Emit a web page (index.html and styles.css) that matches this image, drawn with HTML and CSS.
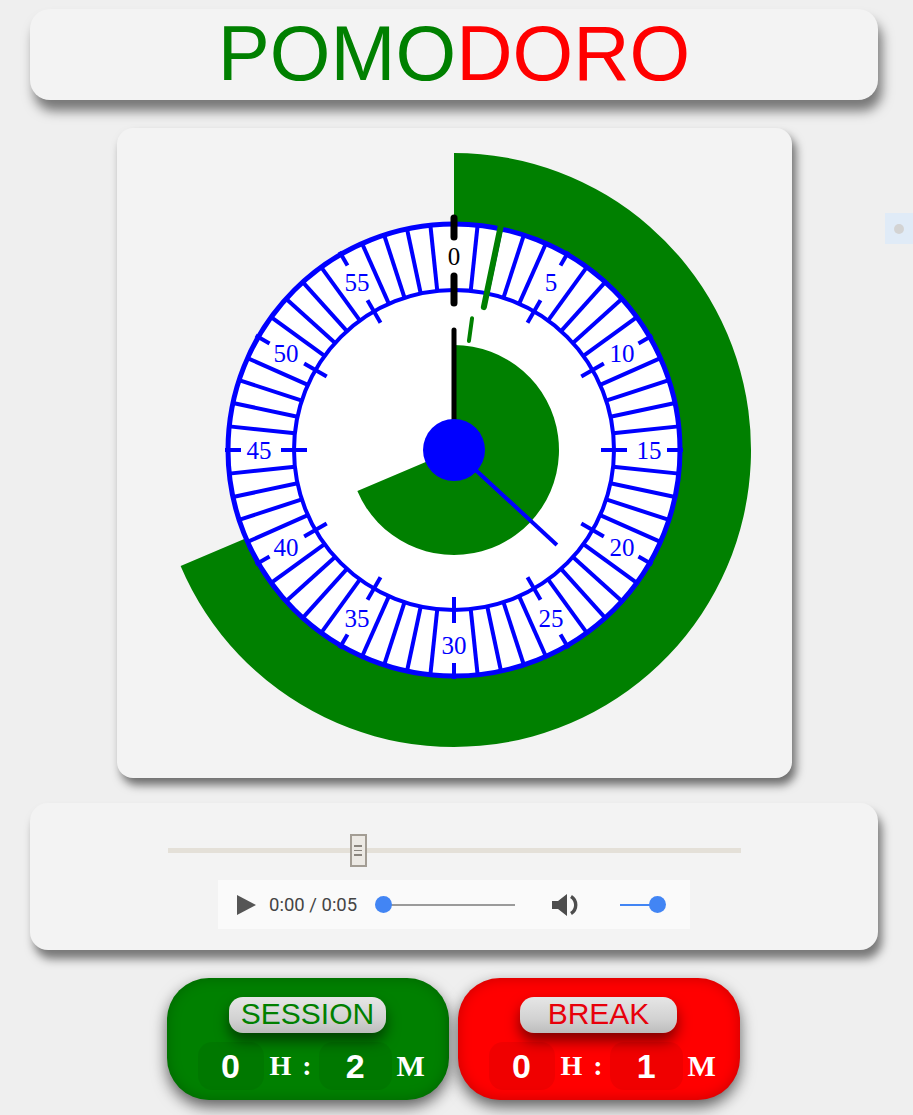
FILE: index.html
```html
<!DOCTYPE html>
<html lang="en">
<head>
<meta charset="utf-8">
<title>Pomodoro</title>
<link rel="stylesheet" href="styles.css">
</head>
<body>
<div class="app">
  <header class="title-card">
    <h1 class="title"><span class="green">POMO</span><span class="red">DORO</span></h1>
  </header>

  <section class="clock-card">
    <svg class="clock" width="600" height="600" viewBox="-300 -300 600 600">
      <defs>
        <line id="m" x1="0" y1="-160" x2="0" y2="-226" stroke="#0000ff" stroke-width="4"/>
        <g id="t">
          <line x1="0" y1="-147" x2="0" y2="-173" stroke="#0000ff" stroke-width="4"/>
          <line x1="0" y1="-213" x2="0" y2="-229" stroke="#0000ff" stroke-width="4"/>
        </g>
      </defs>
      <path d="M0,0 L0,-297 A297,297 0 1 1 -273.4,116.0 Z" fill="#008000"/>
      <circle r="226" fill="#ffffff" stroke="#0000ff" stroke-width="5"/>
      <circle r="160" fill="none" stroke="#0000ff" stroke-width="4"/>
      <g>
        <use href="#m" transform="rotate(6)"/><use href="#m" transform="rotate(12)"/><use href="#m" transform="rotate(18)"/><use href="#m" transform="rotate(24)"/>
        <use href="#m" transform="rotate(36)"/><use href="#m" transform="rotate(42)"/><use href="#m" transform="rotate(48)"/><use href="#m" transform="rotate(54)"/>
        <use href="#m" transform="rotate(66)"/><use href="#m" transform="rotate(72)"/><use href="#m" transform="rotate(78)"/><use href="#m" transform="rotate(84)"/>
        <use href="#m" transform="rotate(96)"/><use href="#m" transform="rotate(102)"/><use href="#m" transform="rotate(108)"/><use href="#m" transform="rotate(114)"/>
        <use href="#m" transform="rotate(126)"/><use href="#m" transform="rotate(132)"/><use href="#m" transform="rotate(138)"/><use href="#m" transform="rotate(144)"/>
        <use href="#m" transform="rotate(156)"/><use href="#m" transform="rotate(162)"/><use href="#m" transform="rotate(168)"/><use href="#m" transform="rotate(174)"/>
        <use href="#m" transform="rotate(186)"/><use href="#m" transform="rotate(192)"/><use href="#m" transform="rotate(198)"/><use href="#m" transform="rotate(204)"/>
        <use href="#m" transform="rotate(216)"/><use href="#m" transform="rotate(222)"/><use href="#m" transform="rotate(228)"/><use href="#m" transform="rotate(234)"/>
        <use href="#m" transform="rotate(246)"/><use href="#m" transform="rotate(252)"/><use href="#m" transform="rotate(258)"/><use href="#m" transform="rotate(264)"/>
        <use href="#m" transform="rotate(276)"/><use href="#m" transform="rotate(282)"/><use href="#m" transform="rotate(288)"/><use href="#m" transform="rotate(294)"/>
        <use href="#m" transform="rotate(306)"/><use href="#m" transform="rotate(312)"/><use href="#m" transform="rotate(318)"/><use href="#m" transform="rotate(324)"/>
        <use href="#m" transform="rotate(336)"/><use href="#m" transform="rotate(342)"/><use href="#m" transform="rotate(348)"/><use href="#m" transform="rotate(354)"/>
      </g>
      <g>
        <use href="#t" transform="rotate(30)"/><use href="#t" transform="rotate(60)"/><use href="#t" transform="rotate(90)"/>
        <use href="#t" transform="rotate(120)"/><use href="#t" transform="rotate(150)"/><use href="#t" transform="rotate(180)"/>
        <use href="#t" transform="rotate(210)"/><use href="#t" transform="rotate(240)"/><use href="#t" transform="rotate(270)"/>
        <use href="#t" transform="rotate(300)"/><use href="#t" transform="rotate(330)"/>
      </g>
      <g class="labels">
        <text x="0" y="-194" class="zero">0</text>
        <text x="97" y="-168">5</text>
        <text x="168" y="-97">10</text>
        <text x="195" y="0">15</text>
        <text x="168" y="97">20</text>
        <text x="97" y="168">25</text>
        <text x="0" y="195">30</text>
        <text x="-97" y="168">35</text>
        <text x="-168" y="97">40</text>
        <text x="-195" y="0">45</text>
        <text x="-168" y="-97">50</text>
        <text x="-97" y="-168">55</text>
      </g>
      <path d="M0,0 L0,-105 A105,105 0 1 1 -96.65,41.03 Z" fill="#008000"/>
      <g stroke-linecap="round">
        <line x1="0" y1="-213" x2="0" y2="-232" stroke="#000" stroke-width="7"/>
        <line x1="0" y1="-147" x2="0" y2="-174" stroke="#000" stroke-width="7"/>
        <line x1="0" y1="-146" x2="0" y2="-230" stroke="#008000" stroke-width="6" transform="rotate(11.8)"/>
        <line x1="0" y1="-110" x2="0" y2="-133" stroke="#008000" stroke-width="4" transform="rotate(7.8)"/>
        <line x1="0" y1="0" x2="0" y2="-120" stroke="#000" stroke-width="5"/>
      </g>
      <line x1="0" y1="0" x2="0" y2="-140" stroke="#0000ff" stroke-width="4" transform="rotate(132.7)"/>
      <circle r="31" fill="#0000ff"/>
    </svg>
  </section>

  <section class="controls-card">
    <div class="range">
      <div class="range-thumb"><i></i><i></i><i></i></div>
    </div>
    <div class="player">
      <svg class="play" width="19" height="20" viewBox="0 0 19 20"><polygon points="0,0 19,10 0,20" fill="#555"/></svg>
      <span class="time">0:00 / 0:05</span>
      <div class="progress"><span class="dot"></span></div>
      <svg class="vol" width="30" height="22" viewBox="0 0 30 22"><path d="M0,7 h6 l9,-7 v22 l-9,-7 h-6 z" fill="#4d4d4d"/><path d="M19,2.5 A10,10 0 0 1 19,19.5" fill="none" stroke="#4d4d4d" stroke-width="3.4"/></svg>
      <div class="volume"><span class="dot"></span></div>
    </div>
  </section>

  <section class="buttons">
    <div class="btn btn-session">
      <div class="pill pill-green">SESSION</div>
      <div class="readout">
        <span class="val">0</span><span class="unit">H</span><span class="colon">:</span><span class="val val2">2</span><span class="unit unit-m">M</span>
      </div>
    </div>
    <div class="btn btn-break">
      <div class="pill pill-red">BREAK</div>
      <div class="readout">
        <span class="val">0</span><span class="unit">H</span><span class="colon">:</span><span class="val val2">1</span><span class="unit unit-m">M</span>
      </div>
    </div>
  </section>
</div>
<div class="side-widget"><span></span></div>
</body>
</html>
```

FILE: styles.css
```css
html, body {
  margin: 0;
  padding: 0;
  overflow: hidden;
}
body {
  background: #efefef;
  font-family: "Liberation Sans", Arial, sans-serif;
  width: 913px;
  height: 1115px;
  position: relative;
}
.app {
  width: 848px;
  margin-left: 30px;
  padding-top: 9px;
  display: flex;
  flex-direction: column;
  align-items: center;
}
.title-card {
  width: 848px;
  height: 91px;
  box-sizing: border-box;
  padding-top: 5px;
  border-radius: 20px;
  background: #f3f3f3;
  box-shadow: 4px 11px 12px rgba(0, 0, 0, 0.5);
  display: flex;
  justify-content: center;
}
.title {
  margin: 0;
  font-weight: normal;
  font-size: 78px;
  line-height: 78px;
  font-family: "Liberation Sans", Arial, sans-serif;
}
.green { color: #008000; }
.red { color: #ff0000; }

.clock-card {
  margin-top: 28px;
  width: 675px;
  height: 650px;
  box-sizing: border-box;
  padding-top: 22px;
  border-radius: 16px;
  background: #f3f3f3;
  box-shadow: 4px 7px 10px rgba(0, 0, 0, 0.55);
  display: flex;
  justify-content: center;
  align-items: flex-start;
}
.clock { display: block; }
.labels text {
  font-family: "Liberation Serif", "Times New Roman", serif;
  font-size: 25px;
  fill: #0000ff;
  text-anchor: middle;
  dominant-baseline: central;
}
.labels text.zero { fill: #000; }

.controls-card {
  margin-top: 25px;
  width: 848px;
  height: 147px;
  box-sizing: border-box;
  padding-top: 45px;
  border-radius: 18px;
  background: #f3f3f3;
  box-shadow: 4px 9px 10px rgba(0, 0, 0, 0.5);
  display: flex;
  flex-direction: column;
  align-items: center;
}
.range {
  position: relative;
  width: 573px;
  height: 5px;
  background: #e4e0d8;
}
.range-thumb {
  position: absolute;
  left: 182px;
  top: -14px;
  width: 17px;
  height: 33px;
  box-sizing: border-box;
  border: 2px solid #a39d94;
  background: #ece9e4;
  display: flex;
  flex-direction: column;
  align-items: center;
  justify-content: center;
  gap: 3px;
}
.range-thumb i {
  display: block;
  width: 8px;
  height: 1.5px;
  background: #8a857e;
}
.player {
  margin-top: 27px;
  width: 472px;
  height: 49px;
  box-sizing: border-box;
  padding-left: 19px;
  background: #fafafa;
  display: flex;
  align-items: center;
}
.play { display: block; }
.time {
  margin-left: 13px;
  font-family: Roboto, "Liberation Sans", sans-serif;
  font-size: 18.5px;
  color: #444;
}
.progress {
  margin-left: 18px;
  width: 140px;
  height: 17px;
  position: relative;
  display: flex;
  align-items: center;
}
.progress::before {
  content: "";
  position: absolute;
  left: 8px;
  right: 0;
  top: 8px;
  height: 1.5px;
  background: #9a9a9a;
}
.dot {
  position: relative;
  display: block;
  width: 17px;
  height: 17px;
  border-radius: 50%;
  background: #4285f4;
}
.vol {
  display: block;
  margin-left: 37px;
}
.volume {
  margin-left: 38px;
  width: 46px;
  height: 17px;
  position: relative;
  display: flex;
  align-items: center;
  justify-content: flex-end;
}
.volume::before {
  content: "";
  position: absolute;
  left: 0;
  right: 8px;
  top: 8px;
  height: 1.5px;
  background: #4285f4;
}

.buttons {
  margin-top: 28px;
  display: flex;
  gap: 9px;
  margin-left: -2px;
}
.btn {
  width: 282px;
  height: 122px;
  box-sizing: border-box;
  padding-top: 19px;
  border-radius: 42px;
  display: flex;
  flex-direction: column;
  align-items: center;
}
.btn-session {
  background: #008000;
  box-shadow: 0 7px 15px rgba(0, 0, 0, 0.6), inset 0 0 14px rgba(0, 0, 0, 0.22);
}
.btn-break {
  background: #ff0000;
  box-shadow: 0 7px 15px rgba(0, 0, 0, 0.6), inset 0 0 14px rgba(0, 0, 0, 0.22);
}
.pill {
  width: 157px;
  height: 36px;
  box-sizing: border-box;
  border-radius: 14px;
  background: linear-gradient(#e6e6e6, #d2d2d2 60%, #bdbdbd);
  box-shadow: 0 8px 14px rgba(0, 0, 0, 0.5);
  text-align: center;
  font-size: 30px;
  line-height: 34px;
}
.pill-green { color: #008000; }
.pill-red { color: #e8000b; }
.readout {
  margin-top: 9px;
  align-self: flex-start;
  padding-left: 31px;
  display: flex;
  align-items: center;
  height: 48px;
  color: #fff;
}
.val {
  width: 66px;
  height: 48px;
  border-radius: 14px;
  background: rgba(0, 0, 0, 0.06);
  text-align: center;
  font-weight: bold;
  font-size: 34px;
  line-height: 48px;
}
.val2 {
  width: 73px;
  margin-left: 7px;
}
.unit, .colon {
  font-family: "Liberation Serif", "Times New Roman", serif;
  font-weight: bold;
  font-size: 28px;
  line-height: 48px;
}
.unit { margin-left: 6px; }
.colon { margin-left: 11px; }
.unit-m { margin-left: 5px; font-size: 30px; }

.side-widget {
  position: absolute;
  left: 885px;
  top: 213px;
  width: 28px;
  height: 31px;
  background: #e0ebf7;
  display: flex;
  align-items: center;
  justify-content: center;
}
.side-widget span {
  display: block;
  width: 10px;
  height: 10px;
  border-radius: 50%;
  background: #d3d3d3;
}
```
